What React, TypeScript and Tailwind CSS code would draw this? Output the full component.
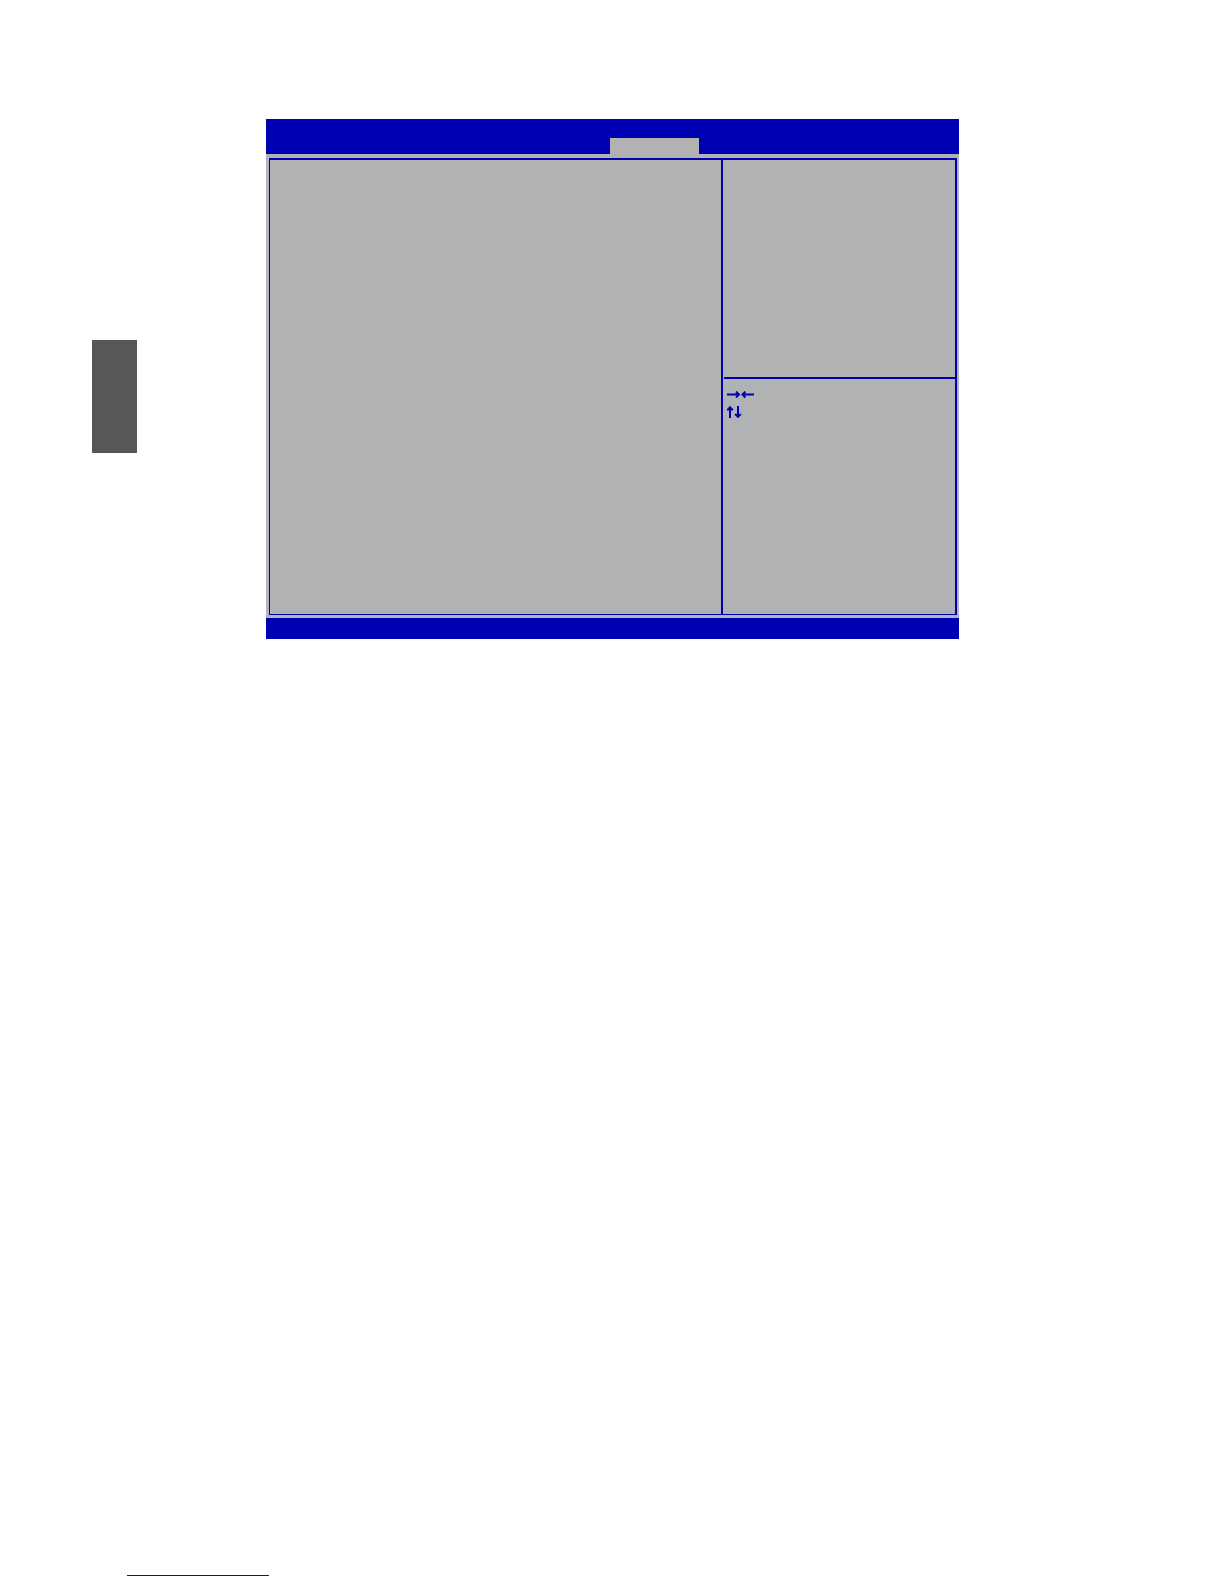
function HorizontalArrows() {
  return (
    <svg width="28" height="8" viewBox="0 0 28 8" fill="none" stroke="#0000b0" strokeWidth="2" aria-hidden="true">
      <path d="M0 3.6H12.5M9 0.6L12 3.6L9 6.6" />
      <path d="M27 3.6H15M18.4 0.6L15.4 3.6L18.4 6.6" />
    </svg>
  );
}

function VerticalArrows() {
  return (
    <svg width="16" height="13" viewBox="0 0 16 13" fill="none" stroke="#0000b0" strokeWidth="2" aria-hidden="true">
      <path d="M3 12V1M0.2 4.2L3 1.3L5.8 4.2" />
      <path d="M11 0V11M8.2 8L11 10.9L13.8 8" />
    </svg>
  );
}

function SetupScreen() {
  return (
    <section aria-label="Setup utility" className="flex-1">
      <header className="flex h-[35px] items-end bg-[#0000b3]">
        <div className="w-[49.7%]" />
        <button type="button" aria-label="Selected tab" className="h-4 w-[89px] bg-[#b2b2b2]" />
      </header>
      <div className="bg-[#b3b3c2] pb-[3px]">
        <div className="h-1 bg-[#b2b2b2]" />
        <div className="mr-[2px] ml-[3px] flex min-h-[457px] border-t-2 border-r-2 border-b border-l border-[#0000b0] bg-[#b0b2b3]">
          <div className="flex-1" />
          <div className="flex w-[234px] flex-col border-l-2 border-[#0000b0]">
            <div className="ml-px h-[219px] border-b-2 border-[#0000b0]" />
            <div className="flex flex-col gap-[7px] px-1 pt-3">
              <HorizontalArrows />
              <VerticalArrows />
            </div>
          </div>
        </div>
      </div>
      <footer className="h-[21px] bg-[#0000b3]" />
    </section>
  );
}

export default function App() {
  return (
    <div className="flex min-h-screen flex-col justify-between bg-white pb-2">
      <main className="flex items-start gap-[129px] pt-[119px] pr-[265px] pl-[92px]">
        <aside className="mt-[221px] h-[113px] w-[45px] bg-[#575759]" />
        <SetupScreen />
      </main>
      <hr className="ml-[127px] w-[142px] border-t border-[#10108c]" />
    </div>
  );
}
